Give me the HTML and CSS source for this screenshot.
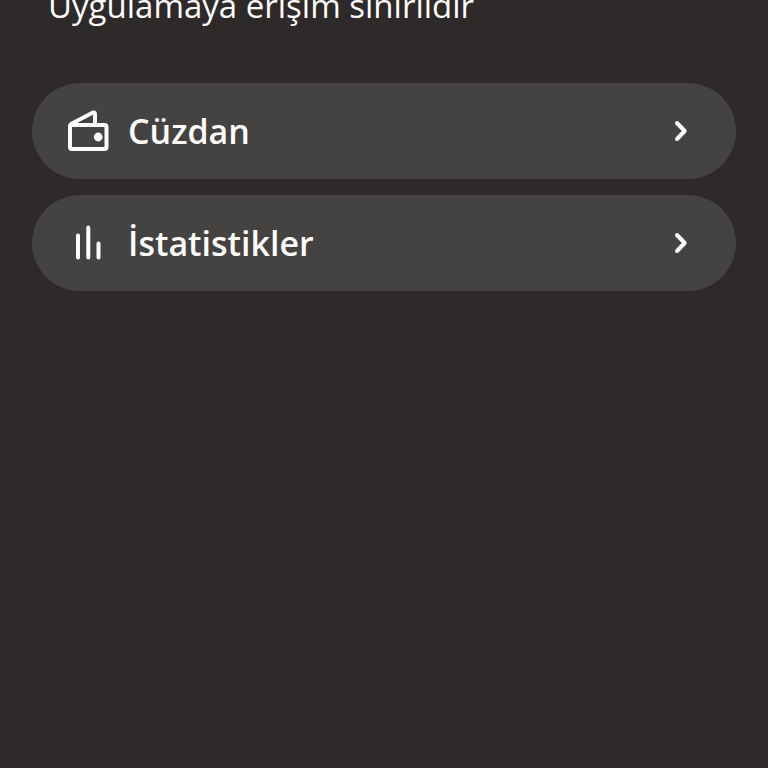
FILE: index.html
```
<!DOCTYPE html>
<html lang="tr">
<head>
    <meta charset="UTF-8">
    <meta name="viewport" content="width=device-width, initial-scale=1.0">
    <title>Cüzdan</title>
    <link rel="stylesheet" href="styles.css">
</head>
<body>

    <main class="screen">
        <p class="notice">Uygulamaya erişim sınırlıdır</p>

        <nav class="menu">
            <button class="menu-btn" type="button">
                <svg class="menu-icon" viewBox="0 0 48 48" aria-hidden="true">
                    <rect x="6" y="18" width="36.500" height="24" rx="2" />
                    <path d="M6 20.500 V19 Q6 17.500 7.500 16.700 L28.500 5.700 Q31 4.700 31 7 V18" />
                    <circle class="dot" cx="34.200" cy="30" r="4.400" />
                </svg>
                <span class="menu-label">Cüzdan</span>
                <svg class="chevron" viewBox="0 0 24 24" aria-hidden="true">
                    <path d="M8 4 L15.700 12 L8 20" />
                </svg>
            </button>

            <button class="menu-btn" type="button">
                <svg class="menu-icon" viewBox="0 0 48 48" aria-hidden="true">
                    <path d="M14 16.500 V38.500 M24.300 8.500 V38.500 M34.500 24.500 V38.500" />
                </svg>
                <span class="menu-label">İstatistikler</span>
                <svg class="chevron" viewBox="0 0 24 24" aria-hidden="true">
                    <path d="M8 4 L15.700 12 L8 20" />
                </svg>
            </button>
        </nav>
    </main>

</body>
</html>
```
FILE: styles.css
```
* {
    margin: 0;
    padding: 0;
    box-sizing: border-box;
}

body {
    font-family: "Open Sans", "Noto Sans", sans-serif;
    background-color: #2d2a29;
    color: #fdfcfb;
}

.screen {
    padding: 0 32px 32px;
}

/* the line is scrolled partly out of view */
.notice {
    margin-top: -14px;
    padding: 0 16px;
    font-size: 33px;
    line-height: 40px;
}

.menu {
    display: flex;
    flex-direction: column;
    gap: 16px;
    margin-top: 57px;
}

.menu-btn {
    display: flex;
    align-items: center;
    gap: 16px;
    width: 100%;
    height: 96px;
    padding: 0 43px 0 32px;
    border: none;
    border-radius: 48px;
    background-color: #444341;
    color: inherit;
    font-family: inherit;
    font-size: 34px;
    font-weight: 600;
    line-height: 40px;
    text-align: left;
    cursor: pointer;
}

.menu-btn:hover {
    background-color: #4c4b48;
}

.menu-label {
    flex-grow: 1;
}

.menu-icon,
.chevron {
    flex-shrink: 0;
    fill: none;
    stroke: currentColor;
    stroke-width: 4;
    stroke-linecap: round;
    stroke-linejoin: round;
}

.menu-icon {
    width: 48px;
    height: 48px;
}

.menu-icon .dot {
    fill: currentColor;
    stroke: none;
}

.chevron {
    width: 24px;
    height: 24px;
}
```
